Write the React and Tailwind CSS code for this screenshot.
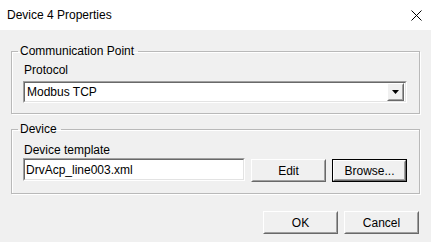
import React from "react";

const sunken =
  "border border-t-[#a0a0a0] border-l-[#a0a0a0] border-r-white border-b-white";
const sunkenInner =
  "border border-t-[#696969] border-l-[#696969] border-r-[#e3e3e3] border-b-[#e3e3e3]";
const raised =
  "border border-t-white border-l-white border-r-[#696969] border-b-[#696969]";
const raisedInner =
  "border border-t-[#f0f0f0] border-l-[#f0f0f0] border-r-[#a0a0a0] border-b-[#a0a0a0]";

const Button = ({ label, isDefault, className = "" }) => (
  <div
    className={`w-[75px] h-[23px] ${
      isDefault ? "border border-black" : ""
    } ${className}`}
  >
    <div className={`w-full h-full ${raised}`}>
      <div
        className={`w-full h-full ${raisedInner} bg-[#f0f0f0] flex items-center justify-center text-black`}
      >
        {label}
      </div>
    </div>
  </div>
);

const GroupBox = ({ title, children, className = "" }) => (
  <fieldset
    className={`border border-[#b9b9b9] shadow-[inset_1px_1px_0_#fff,1px_1px_0_#fff] pl-[11px] pr-[12px] ${className}`}
  >
    <legend className="-ml-[5px] pl-[2px] pr-[4px] leading-[14px]">
      {title}
    </legend>
    {children}
  </fieldset>
);

export default function App() {
  return (
    <div
      className="w-[431px] h-[242px] bg-[#f0f0f0] text-[12px] text-black flex flex-col"
      style={{ fontFamily: '"Liberation Sans", Arial, sans-serif' }}
    >
      <div className="h-[30px] bg-white flex items-center justify-between pl-[7px] pr-[9px]">
        <span className="leading-[14px]">Device 4 Properties</span>
        <svg width="11" height="11" viewBox="0 0 11 11" className="mt-[1px]">
          <path d="M0.5 0.5 L10.5 10.5 M10.5 0.5 L0.5 10.5" stroke="#000" strokeWidth="1" />
        </svg>
      </div>

      <div className="pl-[11px] pr-[12px] pt-[14px] flex flex-col">
        <GroupBox title="Communication Point" className="pt-[5px] pb-[10px]">
          <div className="leading-[14px] pl-[1px]">Protocol</div>
          <div className={`mt-[4px] w-[384px] h-[22px] ${sunken}`}>
            <div className={`w-full h-full ${sunkenInner} bg-white flex items-center`}>
              <span className="flex-1 pl-[2px] leading-[14px]">Modbus TCP</span>
              <div className={`w-[17px] h-[18px] mr-[1px] ${raised}`}>
                <div className={`w-full h-full ${raisedInner} bg-[#f0f0f0] flex items-center justify-center`}>
                  <svg width="7" height="4" viewBox="0 0 7 4">
                    <path d="M0 0 H7 L3.5 4 Z" fill="#000" />
                  </svg>
                </div>
              </div>
            </div>
          </div>
        </GroupBox>

        <GroupBox title="Device" className="mt-[8px] pt-[7px] pb-[11px]">
          <div className="leading-[14px] pl-[1px]">Device template</div>
          <div className="mt-[1px] flex items-start">
            <div className={`w-[222px] h-[23px] ${sunken}`}>
              <div className={`w-full h-full ${sunkenInner} bg-white flex items-center pl-[1px]`}>
                <span className="leading-[14px]">DrvAcp_line003.xml</span>
              </div>
            </div>
            <Button label="Edit" className="ml-[6px] mt-[1px]" />
            <Button label="Browse..." isDefault className="ml-[6px] mt-[1px]" />
          </div>
        </GroupBox>

        <div className="mt-[17px] flex justify-end gap-[6px]">
          <Button label="OK" />
          <Button label="Cancel" />
        </div>
      </div>
    </div>
  );
}
